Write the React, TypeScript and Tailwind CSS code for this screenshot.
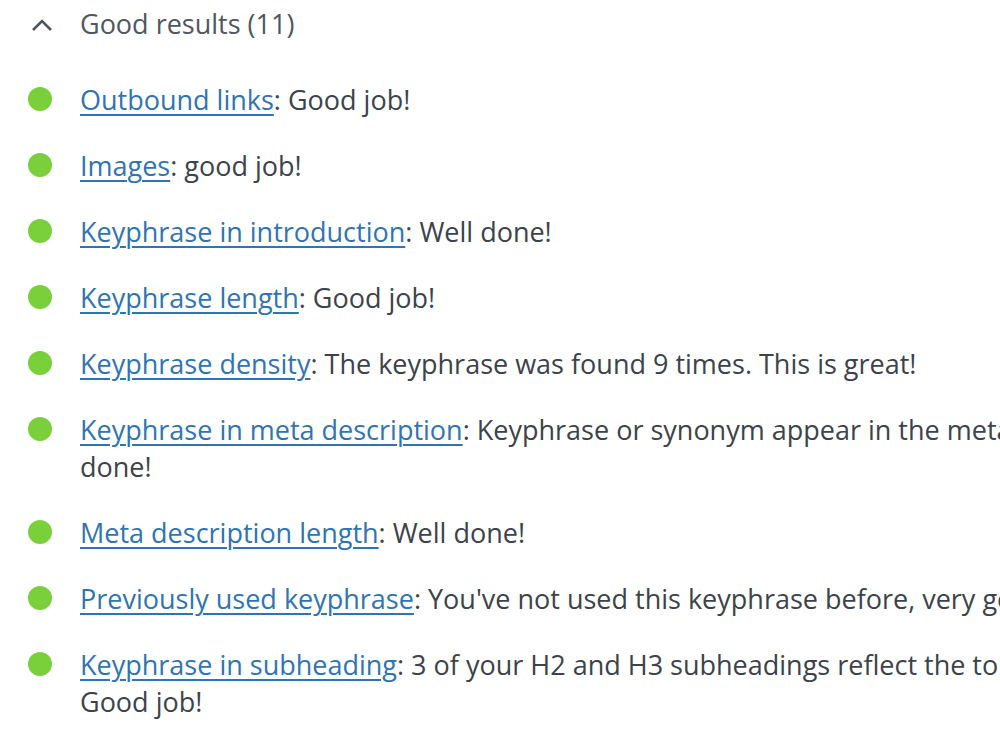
const results: {link: string; text: string}[] = [
	{link: 'Outbound links', text: ': Good job!'},
	{link: 'Images', text: ': good job!'},
	{link: 'Keyphrase in introduction', text: ': Well done!'},
	{link: 'Keyphrase length', text: ': Good job!'},
	{link: 'Keyphrase density', text: ': The keyphrase was found 9 times. This is great!'},
	{
		link: 'Keyphrase in meta description',
		text: ': Keyphrase or synonym appear in the meta description. Well done!',
	},
	{link: 'Meta description length', text: ': Well done!'},
	{
		link: 'Previously used keyphrase',
		text: ": You've not used this keyphrase before, very good.",
	},
	{
		link: 'Keyphrase in subheading',
		text: ': 3 of your H2 and H3 subheadings reflect the topic of your copy. Good job!',
	},
	{link: 'Text length', text: ': The text contains 520 words. Good job!'},
	{link: 'Single title', text: ': You have only one H1 title. Good job!'},
];

export default function App() {
	return (
		<div
			className="h-[750px] w-[1000px] overflow-hidden bg-white"
			style={{fontFamily: '"Open Sans", "Noto Sans", sans-serif'}}
		>
			<div className="w-[1250px] pl-[28px] pt-[4px]">
				<div className="flex h-[41px] items-center text-[27px] text-[#50575e]">
					<svg
						width="22"
						height="14"
						viewBox="0 0 22 14"
						className="ml-[3px] mr-[27px]"
						fill="none"
						stroke="#50575e"
						strokeWidth="2.6"
					>
						<path d="M2 12 L11 3 L20 12" />
					</svg>
					<span>Good results (11)</span>
				</div>
				<ul className="mt-[36px] flex flex-col gap-[29px]">
					{results.map((r) => (
						<li
							key={r.link}
							className="flex text-[27px] leading-[37px] text-[#3c434a]"
						>
							<span className="mt-[6px] mr-[28px] h-[24px] w-[24px] shrink-0 rounded-full bg-[#7ad03a]" />
							<p>
								<a
									href="#"
									className="text-[#2f74b4] underline decoration-[1.5px] underline-offset-[4px]"
								>
									{r.link}
								</a>
								{r.text}
							</p>
						</li>
					))}
				</ul>
			</div>
		</div>
	);
}
